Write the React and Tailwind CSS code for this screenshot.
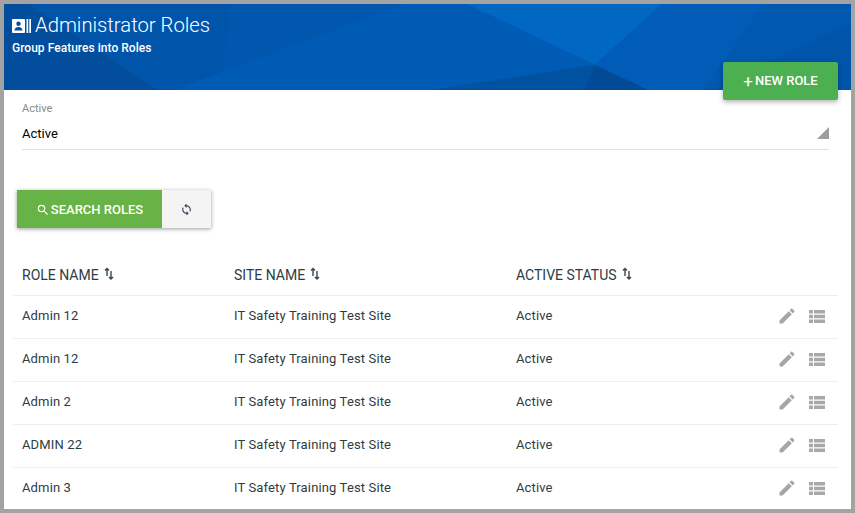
import React from 'react';
import { MdEdit, MdSearch, MdSync } from 'react-icons/md';

const roles = ['Admin 12', 'Admin 12', 'Admin 2', 'ADMIN 22', 'Admin 3'];

const SortIcon = () => (
  <svg className="w-[10px] h-[13px] text-[#37474f] -mt-[4px]" viewBox="0 0 10 13" fill="none" stroke="currentColor" strokeWidth="1.4">
    <path d="M3 9V1.500M1 3.500l2-2 2 2" />
    <path d="M7 4v8M5 10l2 2 2-2" />
  </svg>
);

const CardIcon = () => (
  <svg className="w-[19px] h-[14px] text-white" viewBox="0 0 19 14" fill="currentColor">
    <path fillRule="evenodd" d="M1 0h11a1 1 0 0 1 1 1v12a1 1 0 0 1-1 1H1a1 1 0 0 1-1-1V1a1 1 0 0 1 1-1zm5.500 2.500a2.200 2.200 0 1 0 0 4.400 2.200 2.200 0 0 0 0-4.400zM2.500 11.500h8c0-2.300-1.600-3.600-4-3.600s-4 1.300-4 3.600z" />
    <rect x="14.500" y="0" width="1.700" height="14" />
    <rect x="17.300" y="0" width="1.700" height="14" />
  </svg>
);

const ListIcon = () => (
  <svg className="w-[16px] h-[13px] text-[#a8a8a8]" viewBox="0 0 16 13" fill="currentColor">
    <path d="M0 0h4v3.500H0zM5 0h11v3.500H5zM0 4.750h4v3.500H0zM5 4.750h11v3.500H5zM0 9.500h4V13H0zM5 9.500h11V13H5z" />
  </svg>
);

const HeaderBackground = () => (
  <svg className="absolute inset-0 w-full h-full" viewBox="0 0 847 86" preserveAspectRatio="none">
    <rect width="847" height="86" fill="#0055ab" />
    <polygon points="0,0 25,0 153,86 0,86" fill="#024e9d" />
    <polygon points="226,0 463,0 591,61 428,86 216,86" fill="#0057ad" />
    <polygon points="400,0 463,0 591,61 428,86 170,86" fill="#005bb5" />
    <polygon points="463,0 658,0 591,61" fill="#0068c2" />
    <polygon points="658,0 760,0 700,86 644,86 591,61" fill="#005cb6" />
    <polygon points="760,0 847,0 847,20 700,86" fill="#0058af" />
    <polygon points="428,86 591,61 581,86" fill="#00519f" />
    <polygon points="581,86 591,61 644,86" fill="#004a96" />
  </svg>
);

export default function App() {
  return (
    <div className="w-[855px] h-[513px] overflow-hidden border-4 border-[#a3a3a3] bg-white font-['Roboto',sans-serif] text-[#263238]">
      {/* Header */}
      <div className="relative h-[86px]">
        <HeaderBackground />
        <div className="relative pl-2 pt-[9px] text-white">
          <div className="flex items-center gap-[4px] h-[25px]">
            <CardIcon />
            <span className="text-[20.250px] font-light leading-[25px]">Administrator Roles</span>
          </div>
          <p className="mt-[1px] text-[12px] font-medium leading-[18px] tracking-[0.03px]">Group Features into Roles</p>
        </div>
        <button className="absolute left-[719px] top-[58px] w-[115px] h-[38px] flex items-center justify-center gap-[2px] rounded-[2px] bg-[#4caf50] text-white text-[13px] font-medium shadow-[0_2px_5px_rgba(0,0,0,0.3)]">
          <span className="text-[17px] font-normal leading-none">+</span>
          NEW ROLE
        </button>
      </div>

      {/* Status filter */}
      <div className="ml-[18px] mr-[22px] mt-[12px] h-[48px] border-b border-[#e0e0e0] relative">
        <p className="text-[11px] leading-[14px] text-[#8a8a8a]">Active</p>
        <p className="mt-[10px] text-[13px] leading-[16px] text-black">Active</p>
        <div className="absolute right-0 top-[25px] w-0 h-0 border-l-[12px] border-b-[12px] border-l-transparent border-b-[#9e9e9e]" />
      </div>

      {/* Search buttons */}
      <div className="ml-[13px] mt-[40px] flex w-[194px] h-[38px] shadow-[0_1px_4px_rgba(0,0,0,0.4)]">
        <button className="w-[145px] pt-[1px] flex items-center justify-center gap-[1px] bg-[#67b346] text-white text-[13px] font-medium">
          <MdSearch className="w-[14px] h-[14px]" />
          SEARCH ROLES
        </button>
        <button className="flex-1 flex items-center justify-center bg-[#f4f4f4] text-[#37304a]">
          <MdSync className="w-[13px] h-[13px]" />
        </button>
      </div>

      {/* Table */}
      <div className="ml-[9px] mt-[27px] w-[825px] text-[#2f3c43]">
        <div className="grid grid-cols-[212px_282px_1fr] pl-[9px] h-[41px] items-center border-b border-[#eceff1] text-[14px]">
          <div className="flex items-center gap-[5px]">ROLE NAME <SortIcon /></div>
          <div className="flex items-center gap-[5px]">SITE NAME <SortIcon /></div>
          <div className="flex items-center gap-[5px]">ACTIVE STATUS <SortIcon /></div>
        </div>
        {roles.map((role, i) => (
          <div key={i} className="grid grid-cols-[212px_282px_1fr_auto] pl-[9px] pr-[13px] pb-[2px] h-[43px] items-center border-b border-[#eceff1] text-[13px] tracking-[0.14px]">
            <div>{role}</div>
            <div>IT Safety Training Test Site</div>
            <div>Active</div>
            <div className="flex items-center gap-[12px] text-[#a6a6a6]">
              <MdEdit className="w-[20px] h-[20px]" />
              <ListIcon />
            </div>
          </div>
        ))}
      </div>
    </div>
  );
}
